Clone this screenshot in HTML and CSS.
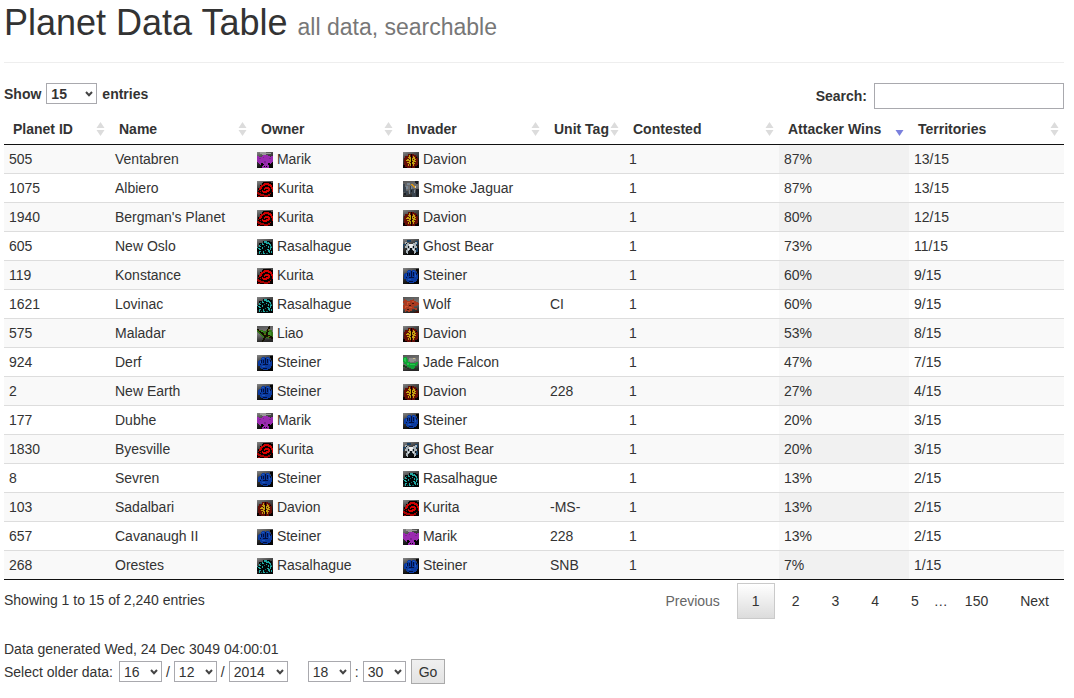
FILE: index.html
```html
<!DOCTYPE html>
<html lang="en">
<head>
<meta charset="utf-8">
<title>Planet Data Table</title>
<link rel="stylesheet" href="styles.css">
</head>
<body>
<svg class="sprites" aria-hidden="true">
  <defs>
    <linearGradient id="steel" x1="0" y1="0" x2="0.4" y2="1"><stop offset="0" stop-color="#888"/><stop offset="0.4" stop-color="#444"/><stop offset="1" stop-color="#060606"/></linearGradient>
    <linearGradient id="ash" x1="0" y1="0" x2="0.2" y2="1"><stop offset="0" stop-color="#555"/><stop offset="0.5" stop-color="#777"/><stop offset="1" stop-color="#282828"/></linearGradient>
    <symbol id="sort" viewBox="0 0 8 14"><path class="sort-up" d="M4 0L8 6H0z"/><path class="sort-down" d="M0 8H8L4 14z"/></symbol>
    <symbol id="chevron" viewBox="0 0 8 6"><path d="M1 1l3 3.2L7 1" fill="none" stroke="#444" stroke-width="2"/></symbol>
    <symbol id="marik" viewBox="0 0 16 16">
      <path fill="url(#steel)" d="M0 0h16v16H0z"/><path fill="#999" d="M3 0h6v1h5v1H9v1H5V2H3z"/>
      <path fill="#9a2ab0" d="M0 4h2v1h3V4h1V3h5v1h2v1h1V4h2v6h-1v1h-1v2h-2v3H5v-3H3v-1H2v-1H1v-1H0z"/>
      <path fill="#7c2290" d="M2 6h2v1H2zM12 6h2v1h-2zM7 9h2v2H7zM6 5h1v1H6z"/>
      <path fill="#050505" d="M4 11h2v1h1v1H6v1H4zM11 11h2v1h1v2h-2v-1h-1zM7 14h1v1H7zM9 14h1v1H9z"/>
    </symbol>
    <symbol id="kurita" viewBox="0 0 16 16">
      <path fill="url(#steel)" d="M0 0h16v16H0z"/>
      <path fill="#080000" d="M6 1h8v1h2v14H0v-5h1V7h2V4h2V2h1z"/>
      <path fill="#cf0000" d="M7 2h5v1h2v1h1v2h1v5h-1V8h-1V6h-1V5h-2V4H8v1H6v1H5v2H4v1H2V7h1V5h1V4h2V3h1z"/>
      <path fill="#d80000" d="M8 6h4v1h1v3h-1v1h-2v1H6v-1H5V9h1v1h3V9h2V8H8v1H7V7h1z"/>
      <path fill="#a80000" d="M0 11h2v1h2v1h3v1h4v-1h2v-1h1v1h-1v2h-2v1H7v-1H3v-1H1v-1H0zM1 9h1v1H1zM3 10h1v1H3zM1 15h2v1H1z"/>
    </symbol>
    <symbol id="davion" viewBox="0 0 16 16">
      <path fill="url(#steel)" d="M0 0h16v16H0z"/>
      <path fill="#650d06" d="M5 2h6v1h2v1h1v2h1v7h-1v1h-2v2H4v-1H2v-2H1V6h1V4h3z"/>
      <path fill="#c5a010" d="M6 3h1v2h1v9H7v-1H6v1H5v-2h1v-1H4v-1h2V9H3V8h1V7h2V6H5V5h1zM10 4h1v1h1v2h1v1h-1v1h1v1h-1v2h-1v2h-1v-2H9V6h1z"/>
      <path fill="#571008" d="M6 7h1v1H6zM7 10h1v1H7zM6 12h1v1H6zM10 7h1v1h-1zM9 9h1v1H9zM11 10h1v1h-1z"/>
      <path fill="#080000" d="M8 2h1v14H8zM0 13h2v2h2v1H0zM14 13h2v3h-3v-1h1zM13 5h1v1h-1z"/>
    </symbol>
    <symbol id="rasalhague" viewBox="0 0 16 16">
      <path fill="url(#steel)" d="M0 0h16v16H0z"/>
      <path fill="#020606" d="M6 2h7v1h2v13H2v-3H0V8h2V4h4z"/>
      <path fill="#20a8a2" d="M7 2h3v1h2v1h1v1h1v2h-1V6h-1V5H9V4H7zM5 4h1v1h1v1H5zM2 6h1v1h1v1H2zM11 7h1v2h-1zM9 6h1v1H9zM13 8h2v1h-1v2h-1zM1 9h2v1h1v1H2v-1H1zM5 8h1v2H5zM10 10h2v1h1v3h-1v-1h-1v-2h-1zM2 12h2v1H3v2H2zM6 12h1v2h1v1H6zM14 12h1v2h-1zM0 8h1v1H0z"/>
      <path fill="#0e6a68" d="M7 7h1v1H7zM8 11h1v1H8zM4 14h1v1H4zM10 3h1v1h-1zM13 7h2v1h-2zM3 5h1v1H3zM9 14h2v1H9z"/>
    </symbol>
    <symbol id="steiner" viewBox="0 0 16 16">
      <path fill="url(#steel)" d="M0 0h16v16H0z"/>
      <path fill="#040404" d="M13 1h3v15H5v-1h7v-1h2v-2h1V5h-1V3h-1z"/>
      <path fill="#0b3a9e" d="M5 2h3v1h1V2h3v1h1v1h1v2h1v5h-1v2h-1v1h-2v1H6v-1H4v-1H3v-2H1V6h1V5h2V3h1z"/>
      <path fill="#1b55bd" d="M5 3h2v1H5zM3 6h1v2H3zM10 3h2v1h-2zM12 6h1v3h-1zM5 11h3v1H5z"/>
      <path fill="#010f40" d="M4 5h1v3H4zM6 5h1v3H6zM8 3h1v6H8zM10 4h1v4h-1zM3 9h1v1H3zM6 9h5v1H6zM6 13h4v1H6zM13 5h1v2h-1z"/>
    </symbol>
    <symbol id="liao" viewBox="0 0 16 16">
      <path fill="url(#ash)" d="M0 0h16v16H0z"/>
      <path fill="#347519" d="M0 4h6v1h3V4h6v2h1v7h-2v-1h-2v1h-1v-1H6v-1H5v-1H4V9H3V8H2V7H1V6H0z"/>
      <path fill="#43962a" d="M3 5h3v1H3zM11 6h3v3h-3z"/>
      <path fill="#131000" d="M0 3h2v1h1v1h1v1h2v1h1v1h2V6h1V3h1V1h1V0h1v3h-1v3h-1v3h2v1h2v1h2v2h-3v-1h-2v-1H9v1H8v2H7v1H6v1H5v-2h1v-2h1v-2H6V9H5V8H4V7H3V6H2V5H1V4H0z"/>
      <path fill="#6e6010" d="M11 3h1v2h-1zM7 8h2v1H7zM11 10h2v1h-2zM2 4h1v1H2z"/>
    </symbol>
    <symbol id="jaguar" viewBox="0 0 16 16">
      <path fill="url(#ash)" d="M0 0h16v16H0z"/><path fill="#39434d" d="M0 3h2v3h1v4h2v4H2v-3H0zM7 5h2v3h2v4h2v4H9v-4H7z"/>
      <path fill="#7a8794" d="M4 2h3v2H4zM3 5h2v3H3zM8 5h1v3H8zM6 9h1v4H6zM11 9h1v3h-1z"/>
      <path fill="#1b2026" d="M12 0h3v3h-2V2h-1zM1 12h2v2H1zM8 9h1v2H8zM13 8h3v5h-1v2h-2z"/>
      <path fill="#d69517" d="M8 3h2v1h1v1h1v2h-1V6h-1V5H9V4H8z"/><path fill="#ccc" d="M12 5h1v2h-1z"/>
    </symbol>
    <symbol id="bear" viewBox="0 0 16 16">
      <path fill="url(#steel)" d="M0 0h16v16H0z"/><path fill="#1b4163" d="M0 5h3v1H1v3H0zM12 2h3v4h-2V4h-1zM4 1h4v2H4zM13 9h2v4h-2z"/>
      <path fill="#a9b3b9" d="M2 3h2v1h2v1h4V4h2V3h2v2h-1v2h1v2h-2v2h1v3h-1v1h-1v-3h-1v-1H6v1H5v3H4v-1H3v-3h1V9H2V7h1V5H2z"/>
      <path fill="#0a1118" d="M5 7h1v2H5zM10 7h1v2h-1zM7 9h2v5H7zM3 4h1v1H3zM13 14h3v2h-3z"/>
      <path fill="#eee" d="M6 5h4v2H9v2H7V7H6zM5 10h1v1H5zM10 10h1v1h-1z"/>
    </symbol>
    <symbol id="wolf" viewBox="0 0 16 16">
      <path fill="url(#ash)" d="M0 0h16v16H0z"/>
      <path fill="#a93a20" d="M1 2h1v1h2v1h3V3h3V2h1v2h2v1h2v1h1v2h-2v1h-3v2h3v2h-2v-1H9v2H7v1H5v-1H3v1H2v-3H0V8h1V6H0V4h1z"/>
      <path fill="#cd512c" d="M4 5h3v1H5v2H4zM2 9h3v1H3v1H2zM9 4h2v1H9zM6 10h3v1H6z"/>
      <path fill="#431109" d="M9 6h2v1H9zM6 8h2v1H6zM4 12h2v1H4zM13 14h3v2h-5v-1h2z"/>
    </symbol>
    <symbol id="falcon" viewBox="0 0 16 16">
      <path fill="url(#ash)" d="M0 0h16v16H0z"/><path fill="#8d8d8d" d="M6 3h7v3h-2v1H7V6H6z"/><path fill="#cdbf8b" d="M10 3h2v1h-2z"/>
      <path fill="#12a035" d="M0 3h1V2h3v2h1v3h2v1h6V7h2v2h-1v2h-2v2h-1v1H8v-1H6v-1H4v-2H3V9H1V7H0z"/>
      <path fill="#22c74a" d="M1 3h2v4H2V6H1zM4 8h2v2H4zM7 9h5v1H7z"/><path fill="#1b401e" d="M0 10h2v1h2v2h2v1H4v-1H2v-1H0zM12 13h3v1h-3z"/>
    </symbol>
  </defs>
</svg>

<h1 class="page-header">Planet Data Table <small>all data, searchable</small></h1>

<main>
<div class="toolbar">
  <label class="length">Show
    <span class="select-box"><select class="select-length"><option>15</option><option>25</option><option>50</option></select><svg><use href="#chevron"/></svg></span>
    entries</label>
  <label class="filter">Search: <input type="search"></label>
</div>

<table class="planets">
  <colgroup><col class="c-id"><col class="c-name"><col class="c-owner"><col class="c-invader"><col class="c-unit"><col class="c-contested"><col class="c-wins"><col class="c-territories"></colgroup>
  <thead>
    <tr>
      <th><button class="sorter">Planet ID<svg><use href="#sort"/></svg></button></th>
      <th><button class="sorter">Name<svg><use href="#sort"/></svg></button></th>
      <th><button class="sorter">Owner<svg><use href="#sort"/></svg></button></th>
      <th><button class="sorter">Invader<svg><use href="#sort"/></svg></button></th>
      <th><button class="sorter">Unit Tag<svg><use href="#sort"/></svg></button></th>
      <th><button class="sorter">Contested<svg><use href="#sort"/></svg></button></th>
      <th aria-sort="descending"><button class="sorter descending">Attacker Wins<svg><use href="#sort"/></svg></button></th>
      <th><button class="sorter">Territories<svg><use href="#sort"/></svg></button></th>
    </tr>
  </thead>
  <tbody>
    <tr><td>505</td><td>Ventabren</td><td><svg class="crest"><use href="#marik"/></svg> Marik</td><td><svg class="crest"><use href="#davion"/></svg> Davion</td><td></td><td>1</td><td class="sorted">87%</td><td>13/15</td></tr>
    <tr><td>1075</td><td>Albiero</td><td><svg class="crest"><use href="#kurita"/></svg> Kurita</td><td><svg class="crest"><use href="#jaguar"/></svg> Smoke Jaguar</td><td></td><td>1</td><td class="sorted">87%</td><td>13/15</td></tr>
    <tr><td>1940</td><td>Bergman's Planet</td><td><svg class="crest"><use href="#kurita"/></svg> Kurita</td><td><svg class="crest"><use href="#davion"/></svg> Davion</td><td></td><td>1</td><td class="sorted">80%</td><td>12/15</td></tr>
    <tr><td>605</td><td>New Oslo</td><td><svg class="crest"><use href="#rasalhague"/></svg> Rasalhague</td><td><svg class="crest"><use href="#bear"/></svg> Ghost Bear</td><td></td><td>1</td><td class="sorted">73%</td><td>11/15</td></tr>
    <tr><td>119</td><td>Konstance</td><td><svg class="crest"><use href="#kurita"/></svg> Kurita</td><td><svg class="crest"><use href="#steiner"/></svg> Steiner</td><td></td><td>1</td><td class="sorted">60%</td><td>9/15</td></tr>
    <tr><td>1621</td><td>Lovinac</td><td><svg class="crest"><use href="#rasalhague"/></svg> Rasalhague</td><td><svg class="crest"><use href="#wolf"/></svg> Wolf</td><td>CI</td><td>1</td><td class="sorted">60%</td><td>9/15</td></tr>
    <tr><td>575</td><td>Maladar</td><td><svg class="crest"><use href="#liao"/></svg> Liao</td><td><svg class="crest"><use href="#davion"/></svg> Davion</td><td></td><td>1</td><td class="sorted">53%</td><td>8/15</td></tr>
    <tr><td>924</td><td>Derf</td><td><svg class="crest"><use href="#steiner"/></svg> Steiner</td><td><svg class="crest"><use href="#falcon"/></svg> Jade Falcon</td><td></td><td>1</td><td class="sorted">47%</td><td>7/15</td></tr>
    <tr><td>2</td><td>New Earth</td><td><svg class="crest"><use href="#steiner"/></svg> Steiner</td><td><svg class="crest"><use href="#davion"/></svg> Davion</td><td>228</td><td>1</td><td class="sorted">27%</td><td>4/15</td></tr>
    <tr><td>177</td><td>Dubhe</td><td><svg class="crest"><use href="#marik"/></svg> Marik</td><td><svg class="crest"><use href="#steiner"/></svg> Steiner</td><td></td><td>1</td><td class="sorted">20%</td><td>3/15</td></tr>
    <tr><td>1830</td><td>Byesville</td><td><svg class="crest"><use href="#kurita"/></svg> Kurita</td><td><svg class="crest"><use href="#bear"/></svg> Ghost Bear</td><td></td><td>1</td><td class="sorted">20%</td><td>3/15</td></tr>
    <tr><td>8</td><td>Sevren</td><td><svg class="crest"><use href="#steiner"/></svg> Steiner</td><td><svg class="crest"><use href="#rasalhague"/></svg> Rasalhague</td><td></td><td>1</td><td class="sorted">13%</td><td>2/15</td></tr>
    <tr><td>103</td><td>Sadalbari</td><td><svg class="crest"><use href="#davion"/></svg> Davion</td><td><svg class="crest"><use href="#kurita"/></svg> Kurita</td><td>-MS-</td><td>1</td><td class="sorted">13%</td><td>2/15</td></tr>
    <tr><td>657</td><td>Cavanaugh II</td><td><svg class="crest"><use href="#steiner"/></svg> Steiner</td><td><svg class="crest"><use href="#marik"/></svg> Marik</td><td>228</td><td>1</td><td class="sorted">13%</td><td>2/15</td></tr>
    <tr><td>268</td><td>Orestes</td><td><svg class="crest"><use href="#rasalhague"/></svg> Rasalhague</td><td><svg class="crest"><use href="#steiner"/></svg> Steiner</td><td>SNB</td><td>1</td><td class="sorted">7%</td><td>1/15</td></tr>
  </tbody>
</table>

<div class="table-footer">
  <div class="info">Showing 1 to 15 of 2,240 entries</div>
  <nav class="pages" aria-label="Pages">
    <a class="page disabled" href="#">Previous</a><a class="page current" href="#">1</a><a class="page" href="#">2</a><a class="page" href="#">3</a><a class="page" href="#">4</a><a class="page" href="#">5</a><span class="ellipsis">…</span><a class="page" href="#">150</a><a class="page" href="#">Next</a>
  </nav>
</div>
</main>

<footer>
  <div>Data generated Wed, 24 Dec 3049 04:00:01</div>
  <form class="archive">
    <span class="archive-label">Select older data:</span>
    <span class="select-box"><select aria-label="Day"><option>16</option></select><svg><use href="#chevron"/></svg></span>
    <span>/</span>
    <span class="select-box"><select aria-label="Month"><option>12</option></select><svg><use href="#chevron"/></svg></span>
    <span>/</span>
    <span class="select-box"><select class="select-year" aria-label="Year"><option>2014</option></select><svg><use href="#chevron"/></svg></span>
    <span class="select-box time"><select aria-label="Hour"><option>18</option></select><svg><use href="#chevron"/></svg></span>
    <span>:</span>
    <span class="select-box"><select aria-label="Minute"><option>30</option></select><svg><use href="#chevron"/></svg></span>
    <button class="go" type="button">Go</button>
  </form>
</footer>
</body>
</html>
```

FILE: styles.css
```css
* { box-sizing: border-box; }
body {
  margin: 0;
  padding: 3px 10px 12px 4px;
  background: #fff;
  color: #333;
  font: 14px/20px "Liberation Sans", Arial, sans-serif;
}
.sprites { position: absolute; width: 0; height: 0; }
input, select, button { font: inherit; color: inherit; }

.page-header {
  margin: 0 0 20px;
  padding-bottom: 19px;
  border-bottom: 1px solid #eee;
  font-size: 36px;
  line-height: 40px;
  font-weight: 400;
}
.page-header small { color: #777; font-size: 23px; line-height: 23px; }

.toolbar { display: flex; justify-content: space-between; align-items: flex-start; }
.toolbar label { display: flex; align-items: center; font-weight: 700; }
.length { gap: 5px; line-height: 18px; }
.filter { gap: 7px; }
.filter input {
  width: 190px;
  height: 26px;
  padding: 2px 4px;
  border: 1px solid #a9a9ae;
  background: #fff;
}

.select-box { display: inline-grid; grid-template-columns: 1fr; align-items: center; }
.select-box select {
  grid-area: 1 / 1;
  width: 43px;
  height: 21px;
  padding: 0 4px;
  border: 1px solid #a9a9ae;
  border-radius: 0;
  background: #fff;
  appearance: none;
}
.select-box .select-length { width: 51px; }
.select-box .select-year { width: 59px; }
.select-box svg {
  grid-area: 1 / 1;
  justify-self: end;
  width: 8px;
  height: 6px;
  margin-right: 4px;
  pointer-events: none;
}

.planets {
  width: 100%;
  table-layout: fixed;
  border-spacing: 0;
  border-bottom: 1px solid #111;
}
.c-id { width: 106px; }
.c-name { width: 142px; }
.c-owner { width: 146px; }
.c-invader { width: 147px; }
.c-unit { width: 79px; }
.c-contested { width: 155px; }
.c-wins { width: 130px; }
.c-territories { width: 155px; }
.planets th { padding: 0; border-bottom: 1px solid #111; }
.sorter {
  display: flex;
  justify-content: space-between;
  align-items: center;
  width: 100%;
  padding: 10px 5px 5px 9px;
  border: 0;
  background: none;
  font-weight: 700;
  white-space: nowrap;
  cursor: pointer;
}
.sorter svg { flex: none; width: 9px; height: 14px; fill: #dcdcdc; }
.sorter.descending svg { fill: #7a80dd; --up: transparent; }
.sort-up { fill: var(--up, inherit); }
.planets td { padding: 4px 5px; border-top: 1px solid #ddd; }
.planets tbody tr:first-child td { border-top: 0; }
.planets tbody tr:nth-child(odd) { background: #f9f9f9; }
.planets .sorted { background: #fafafa; }
.planets tbody tr:nth-child(odd) .sorted { background: #f1f1f1; }
.crest {
  width: 16px;
  height: 16px;
  vertical-align: middle;
  shape-rendering: crispEdges;
}

.table-footer { display: flex; justify-content: space-between; align-items: flex-start; }
.info { padding-top: 10px; }
.pages { display: flex; padding-top: 3px; }
.page {
  margin-left: 2px;
  padding: 7px 14px;
  border: 1px solid transparent;
  color: #333;
  text-decoration: none;
}
.page.disabled { color: #666; }
.page.current { border-color: #cacaca; background: linear-gradient(#fff, #dcdcdc); }
.ellipsis { padding-top: 8px; }

footer { padding-top: 20px; }
.archive { display: flex; align-items: center; gap: 4px; line-height: 18px; }
.archive-label { margin-right: 2px; }
.time { margin-left: 16px; }
.go {
  height: 25px;
  margin-left: 1px;
  padding: 0 7px;
  border: 1px solid #aaa;
  background: linear-gradient(#f0f0f0, #e3e3e3);
}
```
